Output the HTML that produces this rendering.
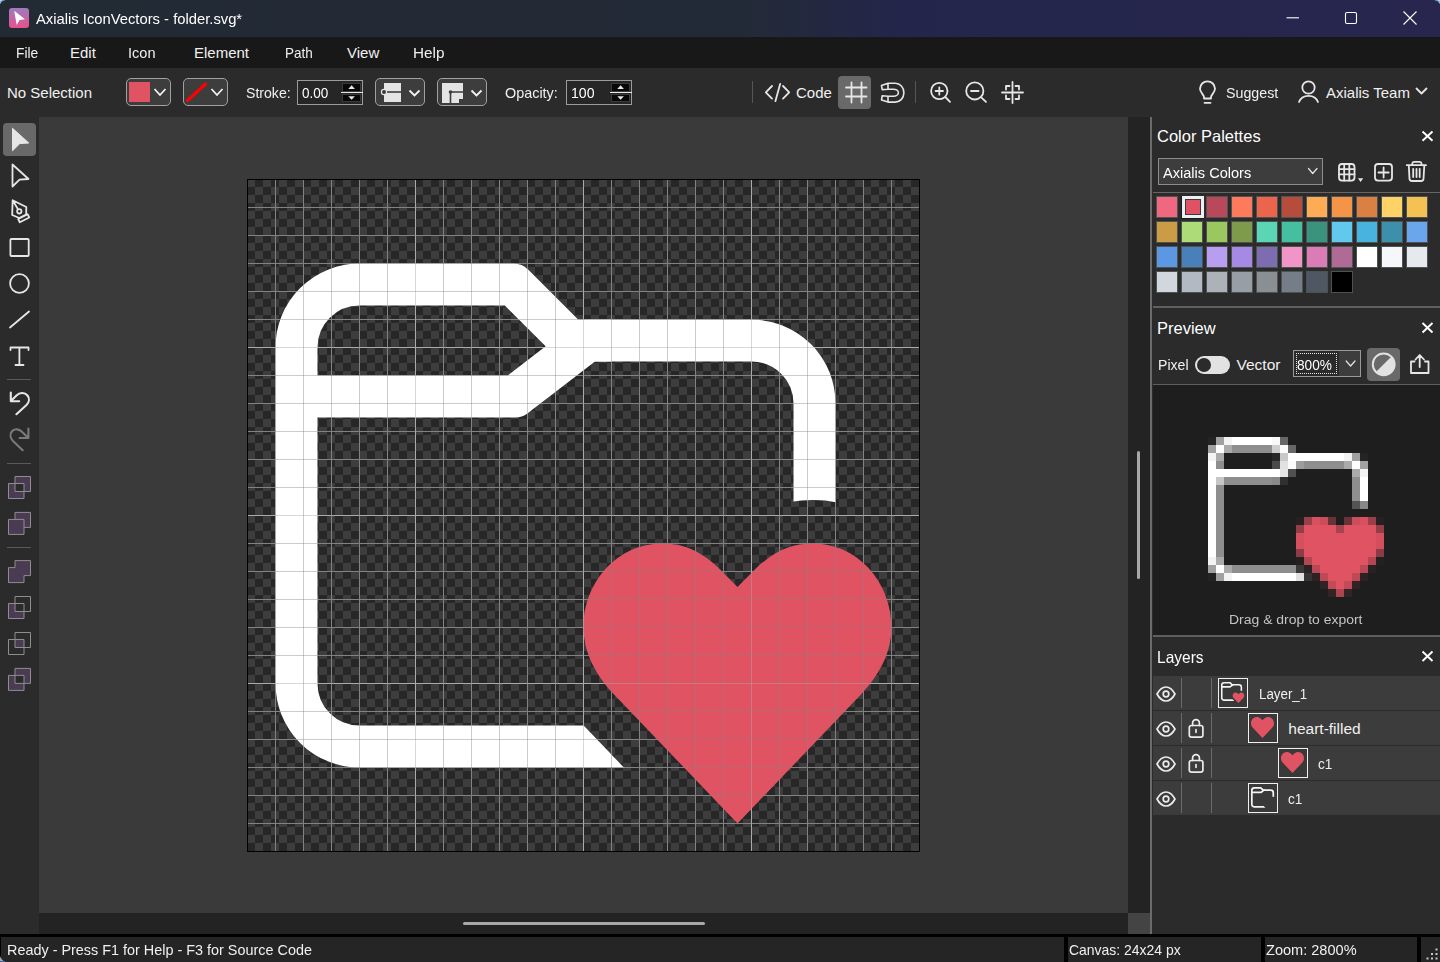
<!DOCTYPE html>
<html><head><meta charset="utf-8">
<style>
*{box-sizing:border-box;margin:0;padding:0}
html,body{width:1440px;height:962px;overflow:hidden;background:#2b2b2b;font-family:"Liberation Sans",sans-serif;color:#f0f0f0;font-size:15px}
.a{position:absolute}
.t{position:absolute;white-space:nowrap;line-height:1}
#title{left:0;top:0;width:1440px;height:37px;background:linear-gradient(90deg,#222a34 0%,#232a37 52%,#23264a 62%,#28264f 100%)}
#menu{left:0;top:37px;width:1440px;height:31px;background:#181818}
#tb{left:0;top:68px;width:1440px;height:49px;background:#2b2b2b}
#ltools{left:0;top:117px;width:39px;height:817px;background:#2b2b2b}
#cv{left:39px;top:117px;width:1089px;height:796px;background:#3a3a3a}
#hs{left:39px;top:913px;width:1089px;height:21px;background:#232323}
#vs{left:1128px;top:117px;width:22px;height:796px;background:#232323}
#corner{left:1128px;top:913px;width:22px;height:21px;background:#444}
#vline{left:1150px;top:117px;width:1px;height:817px;background:#6a6a6a}
#rp{left:1151px;top:117px;width:289px;height:817px;background:#2b2b2b}
#status{left:0;top:934px;width:1440px;height:28px;background:#000}
.sf{position:absolute;top:3px;height:25px;background:#252525}
</style></head><body>
<div id="title" class="a"></div>
<div id="menu" class="a"></div>
<div id="tb" class="a"></div>
<div id="ltools" class="a"></div>
<div id="cv" class="a"></div>
<div id="hs" class="a"></div>
<div id="vs" class="a"></div>
<div id="corner" class="a"></div>
<div id="vline" class="a"></div>
<div id="rp" class="a"></div>
<div id="status" class="a">
 <div class="sf" style="left:1px;width:1063px"></div>
 <div class="sf" style="left:1068px;width:193px"></div>
 <div class="sf" style="left:1265px;width:152px"></div>
 <div class="sf" style="left:1421px;width:19px"></div>
</div>


<!-- TITLE -->
<svg class="a" style="left:9px;top:8px" width="20" height="20" viewBox="0 0 20 20">
 <defs><linearGradient id="ig" x1="0" y1="0" x2="0" y2="1"><stop offset="0" stop-color="#9b7dbf"/><stop offset="1" stop-color="#ea4f8d"/></linearGradient></defs>
 <rect width="20" height="20" rx="3" fill="url(#ig)"/>
 <path d="M5.2 2.8 L16 11.2 L10.6 11.9 L7.7 17 Z" fill="#fff"/>
</svg>
<div class="t" style="transform:scaleX(0.985);transform-origin:0 0;left:36px;top:11.3px;font-size:15px;color:#fff">Axialis IconVectors - folder.svg*</div>
<svg class="a" style="left:1280px;top:8px" width="150" height="22" viewBox="0 0 150 22" fill="none" stroke="#fff" stroke-width="1.1">
 <path d="M6.5 9.8 H19"/>
 <rect x="65.5" y="4.5" width="11" height="11" rx="1.5"/>
 <path d="M123.5 3.5 L136.5 16.5 M136.5 3.5 L123.5 16.5"/>
</svg>
<!-- MENU -->
<div class="t" style="transform:scaleX(0.92);transform-origin:0 0;left:16px;top:45.3px;color:#f0f0f0">File</div>
<div class="t" style="left:70px;top:45.3px;color:#f0f0f0">Edit</div>
<div class="t" style="transform:scaleX(0.97);transform-origin:0 0;left:128px;top:45.3px;color:#f0f0f0">Icon</div>
<div class="t" style="left:194px;top:45.3px;color:#f0f0f0">Element</div>
<div class="t" style="transform:scaleX(0.9);transform-origin:0 0;left:285px;top:45.3px;color:#f0f0f0">Path</div>
<div class="t" style="left:347px;top:45.3px;color:#f0f0f0">View</div>
<div class="t" style="transform:scaleX(1.02);transform-origin:0 0;left:413px;top:45.3px;color:#f0f0f0">Help</div>
<!-- TOOLBAR -->
<div class="t" style="left:7px;top:85.3px;color:#f0f0f0">No Selection</div>
<div class="a" style="left:126px;top:78px;width:45px;height:28px;border:1px solid #a0a0a0;border-radius:5px;background:#3d3d3d"></div>
<div class="a" style="left:129px;top:82px;width:21px;height:20px;background:#e05363"></div>
<div class="a" style="left:183px;top:78px;width:45px;height:28px;border:1px solid #a0a0a0;border-radius:5px;background:#3d3d3d"></div>
<svg class="a" style="left:120px;top:75px" width="380" height="34" viewBox="120 75 380 34" fill="none">
 <path d="M154.5 89 L160 95 L165.5 89" stroke="#f2f2f2" stroke-width="1.8"/>
 <path d="M211.5 89 L217 95 L222.5 89" stroke="#f2f2f2" stroke-width="1.8"/>
 <path d="M187.5 100.5 L205.5 84" stroke="#ff0000" stroke-width="3.2" stroke-linecap="round"/>
</svg>
<div class="t" style="transform:scaleX(0.94);transform-origin:0 0;left:246px;top:85.3px;color:#f0f0f0">Stroke:</div>
<div class="a" style="left:297px;top:80px;width:66px;height:25px;border:1px solid #9c9c9c;background:#262626"></div>
<div class="t" style="transform:scaleX(0.9);transform-origin:0 0;left:302px;top:85.3px;color:#fff">0.00</div>
<div class="a" style="left:342px;top:83px;width:19px;height:8.5px;background:#080808;border:1px solid #3a3a3a"></div>
<div class="a" style="left:342px;top:93.5px;width:19px;height:8.5px;background:#080808;border:1px solid #3a3a3a"></div>
<div class="a" style="left:341px;top:92px;width:22px;height:1px;background:#e8e8e8"></div>
<svg class="a" style="left:340px;top:80px" width="24" height="25" viewBox="0 0 24 25"><path d="M8.3 9 L11.6 5.3 L14.9 9 Z M8.3 16.2 L14.9 16.2 L11.6 19.8 Z" fill="#e8e8e8"/></svg>
<div class="a" style="left:375px;top:78px;width:50px;height:28px;border:1px solid #a0a0a0;border-radius:5px;background:#3d3d3d"></div>
<div class="a" style="left:437px;top:78px;width:50px;height:28px;border:1px solid #a0a0a0;border-radius:5px;background:#3d3d3d"></div>
<svg class="a" style="left:370px;top:75px" width="130" height="34" viewBox="370 75 130 34">
 <rect x="384" y="83" width="17" height="19" fill="#e4e4e4"/>
 <path d="M384 92 H401" stroke="#3d3d3d" stroke-width="1.6"/>
 <circle cx="384" cy="92" r="2.6" fill="#3d3d3d" stroke="#e4e4e4" stroke-width="1.2"/>
 <path d="M409.5 90.5 L414.5 95.5 L419.5 90.5" stroke="#f2f2f2" stroke-width="1.8" fill="none"/>
 <path d="M442 83 H463 V103 H442 Z" fill="#e4e4e4"/>
 <path d="M450.5 103 V92 H463" stroke="#3d3d3d" stroke-width="1.6" fill="none"/>
 <rect x="459" y="99" width="4" height="4" fill="#3d3d3d"/>
 <circle cx="450.5" cy="92" r="1.8" fill="#3d3d3d"/>
 <path d="M471.5 90.5 L476.5 95.5 L481.5 90.5" stroke="#f2f2f2" stroke-width="1.8" fill="none"/>
</svg>
<div class="t" style="transform:scaleX(0.96);transform-origin:0 0;left:505px;top:85.3px;color:#f0f0f0">Opacity:</div>
<div class="a" style="left:566px;top:80px;width:66px;height:25px;border:1px solid #9c9c9c;background:#262626"></div>
<div class="t" style="transform:scaleX(0.94);transform-origin:0 0;left:571px;top:85.3px;color:#fff">100</div>
<div class="a" style="left:611px;top:83px;width:19px;height:8.5px;background:#080808;border:1px solid #3a3a3a"></div>
<div class="a" style="left:611px;top:93.5px;width:19px;height:8.5px;background:#080808;border:1px solid #3a3a3a"></div>
<div class="a" style="left:610px;top:92px;width:22px;height:1px;background:#e8e8e8"></div>
<svg class="a" style="left:609px;top:80px" width="24" height="25" viewBox="0 0 24 25"><path d="M8.3 9 L11.6 5.3 L14.9 9 Z M8.3 16.2 L14.9 16.2 L11.6 19.8 Z" fill="#e8e8e8"/></svg>
<div class="a" style="left:752px;top:81px;width:1px;height:22px;background:#555"></div>
<div class="a" style="left:915px;top:81px;width:1px;height:22px;background:#555"></div>
<div class="a" style="left:838px;top:76px;width:33px;height:33px;border-radius:4px;background:#696969"></div>
<svg class="a" style="left:750px;top:72px" width="290" height="42" viewBox="750 72 290 42" fill="none" stroke="#e6e6e6" stroke-width="1.8" stroke-linecap="round" stroke-linejoin="round">
 <path d="M772 86 L765.8 92.3 L772 98.6 M783 86 L789.2 92.3 L783 98.6 M780.2 83.8 L775.4 101.2"/>
 <path d="M851.5 82.5 V102.5 M861.5 82.5 V102.5 M846 87.5 H866.5 M846 96.5 H866.5"/>
 <path d="M888 83.3 H895.4 A8.5 9.4 0 0 1 895.4 102.1 H888 L881.5 100 L882.2 95.7 L888 96.2 H893.5 A4.9 3.5 0 0 0 893.5 89.2 H888 L882.2 89.6 L881.5 85.5 Z M888 83.3 V89.2 M888 96.2 V102.1" stroke-width="1.6"/>
 <circle cx="939.3" cy="91" r="8.2"/><path d="M945.3 97 L950 101.8 M935.6 91 H943 M939.3 87.3 V94.7"/>
 <circle cx="974.8" cy="90.9" r="8.6"/><path d="M981.2 97.3 L986 101.9 M971 91 H978.6"/>
 <path d="M1012.5 82 V103 M1002 92.5 H1023 M1006 89.5 V86 H1009.5 M1015.5 86 H1019 V89.5 M1019 95.5 V99 H1015.5 M1009.5 99 H1006 V95.5"/>
</svg>
<div class="t" style="left:796px;top:85.3px;color:#f0f0f0">Code</div>
<svg class="a" style="left:1190px;top:72px" width="250" height="40" viewBox="1190 72 250 40" fill="none" stroke="#e6e6e6" stroke-width="1.8" stroke-linecap="round" stroke-linejoin="round">
 <path d="M1204 98.5 V97 C1204 95 1200 92.5 1200 88.8 A7.5 7.5 0 0 1 1215 88.8 C1215 92.5 1211 95 1211 97 V98.5 Z" />
 <path d="M1204.5 102.8 H1210.5"/>
 <circle cx="1308.5" cy="87.5" r="6.2"/>
 <path d="M1299 102 A10 9 0 0 1 1318 102"/>
 <path d="M1416.5 88.5 L1421.5 93.5 L1426.5 88.5"/>
</svg>
<div class="t" style="transform:scaleX(0.95);transform-origin:0 0;left:1226px;top:85.3px;color:#f0f0f0">Suggest</div>
<div class="t" style="left:1326px;top:85.3px;color:#f0f0f0">Axialis Team</div>


<!-- LEFT TOOLS -->
<div class="a" style="left:3px;top:123px;width:33px;height:33px;border-radius:4px;background:#696969"></div>
<svg class="a" style="left:0;top:117px" width="39" height="600" viewBox="0 117 39 600" fill="none" stroke="#e6e6e6" stroke-width="1.8" stroke-linejoin="round" stroke-linecap="round">
 <path d="M12.8 128.5 L28.8 143 L19.8 143.6 L12.8 150.5 Z" fill="#e6e6e6" stroke-width="1"/>
 <path d="M12.5 164.5 L28.5 179 L19.5 179.6 L12.5 186.5 Z"/>
 <path d="M12.6 200.2 L26.3 207 L26.2 214.5 L19.3 218 L12.2 215 Z M12.8 200.6 L18 209.2" />
 <circle cx="19.3" cy="211.3" r="2.2"/>
 <path d="M18.2 219 L27.6 214.2 L29.2 217.5 L19.8 222.3 Z"/>
 <rect x="10.4" y="239" width="18.3" height="17" rx="1"/>
 <circle cx="19.5" cy="283.5" r="9.4"/>
 <path d="M10 327.5 L29 311.5"/>
 <path d="M10.5 347.5 H28.5 M10.5 347.5 V350 M28.5 347.5 V350 M19.4 347.5 V365 M15.5 365 H23.5"/>
 <path d="M10.8 392.6 V401.2 H19.2 M11.4 400.6 L16.5 395.5 C19.5 392.5 24.5 391.8 27.5 395.5 C30 398.5 29 402.5 26.5 405 L16.4 414.2" stroke-width="2.1"/>
 <path d="M28.4 428.6 V438 H19.6 M27.8 437.4 L22.5 432.2 C19.5 429 14.5 428 11.8 431.5 C9.5 434.5 10.5 438.5 13 441 L22.7 450.2" stroke="#7a7a7a" stroke-width="2.1"/>
</svg>
<div class="a" style="left:7px;top:379px;width:24px;height:1px;background:#5a5a5a"></div>
<div class="a" style="left:7px;top:463px;width:24px;height:1px;background:#5a5a5a"></div>
<div class="a" style="left:7px;top:547px;width:24px;height:1px;background:#5a5a5a"></div>
<svg class="a" style="left:0;top:460px" width="39" height="240" viewBox="0 460 39 240" stroke-width="1">
<path d="M15 476.5 H30.5 V491.5 H15 Z M8.5 483.5 H24 V498.5 H8.5 Z" fill="#4a3a52" fill-rule="evenodd"/><path d="M15 476.5 H30.5 V491.5 H15 Z M8.5 483.5 H24 V498.5 H8.5 Z" fill="none" stroke="#8e8e8e"/><path d="M15 512.4 H30.5 V527.4 H15 Z" fill="#4a3a52" stroke="#8e8e8e"/><path d="M8.5 519.4 H24 V534.4 H8.5 Z" fill="#4a3a52" stroke="#8e8e8e"/><path d="M15 560.6 H30.5 V575.6 H24 V582.6 H8.5 V567.6 H15 Z" fill="#4a3a52" stroke="#8e8e8e"/><path d="M8.5 603.5 H15 V611.5 H24 V618.5 H8.5 Z" fill="#4a3a52"/><path d="M15 596.5 H30.5 V611.5 H15 Z M8.5 603.5 H24 V618.5 H8.5 Z" fill="none" stroke="#8e8e8e"/><path d="M15 639.5 H24 V647.5 H15 Z" fill="#4a3a52"/><path d="M15 632.5 H30.5 V647.5 H15 Z M8.5 639.5 H24 V654.5 H8.5 Z" fill="none" stroke="#8e8e8e"/><path d="M15 668.4 H30.5 V683.4 H15 Z M8.5 675.4 H24 V690.4 H8.5 Z" fill="#4a3a52" fill-rule="evenodd"/><path d="M15 668.4 H30.5 V683.4 H15 Z M8.5 675.4 H24 V690.4 H8.5 Z" fill="none" stroke="#8e8e8e"/>
</svg>


<!-- RIGHT PANEL -->
<div class="a" style="left:1150px;top:117px;width:2px;height:817px;background:#6b6b6b"></div>
<div class="t" style="left:1157px;top:127.7px;font-size:16.5px;color:#fff">Color Palettes</div>
<svg class="a" style="left:1418px;top:127px" width="18" height="18" viewBox="0 0 18 18" fill="none" stroke="#fff" stroke-width="1.9"><path d="M4.5 4.5 L14.5 13.8 M14.5 4.5 L4.5 13.8"/></svg>
<div class="a" style="left:1158px;top:158px;width:165px;height:27px;border:1px solid #8d8d8d;background:#3d3d3d"></div>
<div class="t" style="transform:scaleX(0.94);transform-origin:0 0;left:1162.5px;top:165px;font-size:15.5px;color:#fff">Axialis Colors</div>
<svg class="a" style="left:1300px;top:160px" width="140" height="30" viewBox="1300 160 140 30" fill="none" stroke="#e6e6e6" stroke-width="1.8" stroke-linecap="round" stroke-linejoin="round">
 <path d="M1308.5 168.5 L1312.7 173.5 L1317 168.5" stroke-width="1.2"/>
 <rect x="1339" y="164" width="15.5" height="16.6" rx="3"/>
 <path d="M1344.2 164 V180.6 M1349.3 164 V180.6 M1339 169.2 H1354.5 M1339 174.3 H1354.5"/>
 <path d="M1358 178.3 H1363.2 L1360.6 182 Z" fill="#e6e6e6" stroke="none"/>
 <rect x="1375" y="164" width="17" height="16.6" rx="3"/>
 <path d="M1378.5 172.5 H1388.7 M1383.6 167.4 V177.6"/>
 <path d="M1406.8 165.2 H1426 M1412.3 165 V163.5 A1.8 1.8 0 0 1 1414 161.8 H1419.8 A1.8 1.8 0 0 1 1421.5 163.5 V165 M1408.8 165.5 L1409.5 179 A2.5 2.5 0 0 0 1412 181 H1421 A2.5 2.5 0 0 0 1423.5 179 L1424.3 165.5 M1413.2 168.8 V177 M1416.5 168.8 V177 M1419.7 168.8 V177"/>
</svg>
<div class="a" style="left:1153px;top:192px;width:287px;height:1px;background:#666"></div>
<div class="a" style="left:1156px;top:196px;width:22px;height:22px;border:1px solid #4d5252;background:#f06780"></div><div class="a" style="left:1181px;top:196px;width:23px;height:23px;background:#1a1a1a"></div><div class="a" style="left:1182px;top:196px;width:22px;height:22px;border:3px solid #eceff3;background:#e05263;outline:1px solid #3a3a3a;outline-offset:-4px"></div><div class="a" style="left:1206px;top:196px;width:22px;height:22px;border:1px solid #4d5252;background:#b8485a"></div><div class="a" style="left:1231px;top:196px;width:22px;height:22px;border:1px solid #4d5252;background:#fd7b5c"></div><div class="a" style="left:1256px;top:196px;width:22px;height:22px;border:1px solid #4d5252;background:#ea654b"></div><div class="a" style="left:1281px;top:196px;width:22px;height:22px;border:1px solid #4d5252;background:#b64d3c"></div><div class="a" style="left:1306px;top:196px;width:22px;height:22px;border:1px solid #4d5252;background:#fdac55"></div><div class="a" style="left:1331px;top:196px;width:22px;height:22px;border:1px solid #4d5252;background:#f39447"></div><div class="a" style="left:1356px;top:196px;width:22px;height:22px;border:1px solid #4d5252;background:#d98042"></div><div class="a" style="left:1381px;top:196px;width:22px;height:22px;border:1px solid #4d5252;background:#fdd266"></div><div class="a" style="left:1406px;top:196px;width:22px;height:22px;border:1px solid #4d5252;background:#f5c152"></div><div class="a" style="left:1156px;top:221px;width:22px;height:22px;border:1px solid #4d5252;background:#cc9b45"></div><div class="a" style="left:1181px;top:221px;width:22px;height:22px;border:1px solid #4d5252;background:#acdb78"></div><div class="a" style="left:1206px;top:221px;width:22px;height:22px;border:1px solid #4d5252;background:#9ac85e"></div><div class="a" style="left:1231px;top:221px;width:22px;height:22px;border:1px solid #4d5252;background:#7d9b4a"></div><div class="a" style="left:1256px;top:221px;width:22px;height:22px;border:1px solid #4d5252;background:#5bd6b5"></div><div class="a" style="left:1281px;top:221px;width:22px;height:22px;border:1px solid #4d5252;background:#44c0a1"></div><div class="a" style="left:1306px;top:221px;width:22px;height:22px;border:1px solid #4d5252;background:#39937e"></div><div class="a" style="left:1331px;top:221px;width:22px;height:22px;border:1px solid #4d5252;background:#60c9ed"></div><div class="a" style="left:1356px;top:221px;width:22px;height:22px;border:1px solid #4d5252;background:#48b3de"></div><div class="a" style="left:1381px;top:221px;width:22px;height:22px;border:1px solid #4d5252;background:#3d90ac"></div><div class="a" style="left:1406px;top:221px;width:22px;height:22px;border:1px solid #4d5252;background:#6aa6ec"></div><div class="a" style="left:1156px;top:246px;width:22px;height:22px;border:1px solid #4d5252;background:#5c97e3"></div><div class="a" style="left:1181px;top:246px;width:22px;height:22px;border:1px solid #4d5252;background:#4a80ba"></div><div class="a" style="left:1206px;top:246px;width:22px;height:22px;border:1px solid #4d5252;background:#b89df0"></div><div class="a" style="left:1231px;top:246px;width:22px;height:22px;border:1px solid #4d5252;background:#a689e2"></div><div class="a" style="left:1256px;top:246px;width:22px;height:22px;border:1px solid #4d5252;background:#7e6cb0"></div><div class="a" style="left:1281px;top:246px;width:22px;height:22px;border:1px solid #4d5252;background:#f195c9"></div><div class="a" style="left:1306px;top:246px;width:22px;height:22px;border:1px solid #4d5252;background:#db7cb7"></div><div class="a" style="left:1331px;top:246px;width:22px;height:22px;border:1px solid #4d5252;background:#b06a96"></div><div class="a" style="left:1356px;top:246px;width:22px;height:22px;border:1px solid #4d5252;background:#ffffff"></div><div class="a" style="left:1381px;top:246px;width:22px;height:22px;border:1px solid #4d5252;background:#f5f7fa"></div><div class="a" style="left:1406px;top:246px;width:22px;height:22px;border:1px solid #4d5252;background:#e6e9ed"></div><div class="a" style="left:1156px;top:271px;width:22px;height:22px;border:1px solid #4d5252;background:#d2d6dd"></div><div class="a" style="left:1181px;top:271px;width:22px;height:22px;border:1px solid #4d5252;background:#b3b9c2"></div><div class="a" style="left:1206px;top:271px;width:22px;height:22px;border:1px solid #4d5252;background:#adb1b8"></div><div class="a" style="left:1231px;top:271px;width:22px;height:22px;border:1px solid #4d5252;background:#979ea6"></div><div class="a" style="left:1256px;top:271px;width:22px;height:22px;border:1px solid #4d5252;background:#8a8f93"></div><div class="a" style="left:1281px;top:271px;width:22px;height:22px;border:1px solid #4d5252;background:#757d88"></div><div class="a" style="left:1306px;top:271px;width:22px;height:22px;border:1px solid #4d5252;background:#4f5763"></div><div class="a" style="left:1331px;top:271px;width:22px;height:22px;border:1px solid #4d5252;background:#000000"></div>
<div class="a" style="left:1153px;top:306px;width:287px;height:2px;background:#5f5f5f"></div>
<div class="t" style="left:1157px;top:320px;font-size:16.5px;color:#fff">Preview</div>
<svg class="a" style="left:1418px;top:319px" width="18" height="18" viewBox="0 0 18 18" fill="none" stroke="#fff" stroke-width="1.9"><path d="M4.5 4 L14.5 13.5 M14.5 4 L4.5 13.5"/></svg>
<div class="t" style="transform:scaleX(0.91);transform-origin:0 0;left:1157.5px;top:356.5px;font-size:15.5px;color:#f0f0f0">Pixel</div>
<div class="a" style="left:1195px;top:356px;width:35px;height:18px;border-radius:9px;background:#e2e2e2"></div>
<div class="a" style="left:1197px;top:358px;width:14px;height:14px;border-radius:7px;background:#2b2b2b"></div>
<div class="t" style="left:1236.5px;top:356.5px;font-size:15.5px;color:#f0f0f0">Vector</div>
<div class="a" style="left:1293px;top:350px;width:68px;height:27px;border:1px solid #9a9a9a;background:#3d3d3d"></div>
<div class="a" style="left:1294px;top:351px;width:45px;height:25px;background:#2a2a2a"></div>
<div class="a" style="left:1296px;top:353px;width:41px;height:21px;border:1px dotted #e8e8e8"></div>
<div class="t" style="transform:scaleX(0.91);transform-origin:0 0;left:1297px;top:357px;font-size:15px;color:#fff">800%</div>
<div class="a" style="left:1367px;top:348px;width:33px;height:33px;border-radius:4px;background:#696969"></div>
<svg class="a" style="left:1340px;top:345px" width="100" height="40" viewBox="1340 345 100 40" fill="none" stroke="#e6e6e6" stroke-width="1.8" stroke-linecap="round" stroke-linejoin="round">
 <path d="M1346.2 361 L1350.6 366 L1355 361" stroke-width="1.2"/>
 <path d="M1375.9 372.1 L1391.5 356.5 A11 11 0 0 1 1375.9 372.1 Z" fill="#e2e2e2" stroke="none"/>
 <circle cx="1383.7" cy="364.3" r="10.9" stroke="#e2e2e2" stroke-width="2"/>
 <path d="M1414.5 361.5 H1411 V373 H1428.5 V361.5 H1425 M1419.7 367 V355.5 M1415.5 359.5 L1419.7 355 L1424 359.5"/>
</svg>
<div class="a" style="left:1153px;top:384px;width:287px;height:1px;background:#5f5f5f"></div>
<div class="a" style="left:1153px;top:385px;width:287px;height:250px;background:#1e1e1e"></div>
<svg class="a" style="left:1200px;top:413px" width="192" height="192" viewBox="0 0 192 192" shape-rendering="crispEdges"><rect x="8" y="24" width="8" height="8" fill="#242424"/><rect x="16" y="24" width="8" height="8" fill="#a1a1a1"/><rect x="24" y="24" width="8" height="8" fill="#f3f3f3"/><rect x="32" y="24" width="8" height="8" fill="#ffffff"/><rect x="40" y="24" width="8" height="8" fill="#ffffff"/><rect x="48" y="24" width="8" height="8" fill="#ffffff"/><rect x="56" y="24" width="8" height="8" fill="#ffffff"/><rect x="64" y="24" width="8" height="8" fill="#ffffff"/><rect x="72" y="24" width="8" height="8" fill="#f8f8f8"/><rect x="80" y="24" width="8" height="8" fill="#676767"/><rect x="8" y="32" width="8" height="8" fill="#a1a1a1"/><rect x="16" y="32" width="8" height="8" fill="#fdfdfd"/><rect x="24" y="32" width="8" height="8" fill="#aaaaaa"/><rect x="32" y="32" width="8" height="8" fill="#8e8e8e"/><rect x="40" y="32" width="8" height="8" fill="#8e8e8e"/><rect x="48" y="32" width="8" height="8" fill="#8e8e8e"/><rect x="56" y="32" width="8" height="8" fill="#8e8e8e"/><rect x="64" y="32" width="8" height="8" fill="#8e8e8e"/><rect x="72" y="32" width="8" height="8" fill="#cdcdcd"/><rect x="80" y="32" width="8" height="8" fill="#fbfbfb"/><rect x="88" y="32" width="8" height="8" fill="#676767"/><rect x="8" y="40" width="8" height="8" fill="#f3f3f3"/><rect x="16" y="40" width="8" height="8" fill="#aaaaaa"/><rect x="72" y="40" width="8" height="8" fill="#282828"/><rect x="80" y="40" width="8" height="8" fill="#c9c9c9"/><rect x="88" y="40" width="8" height="8" fill="#ffffff"/><rect x="96" y="40" width="8" height="8" fill="#ffffff"/><rect x="104" y="40" width="8" height="8" fill="#ffffff"/><rect x="112" y="40" width="8" height="8" fill="#ffffff"/><rect x="120" y="40" width="8" height="8" fill="#ffffff"/><rect x="128" y="40" width="8" height="8" fill="#ffffff"/><rect x="136" y="40" width="8" height="8" fill="#ffffff"/><rect x="144" y="40" width="8" height="8" fill="#f3f3f3"/><rect x="152" y="40" width="8" height="8" fill="#a0a0a0"/><rect x="160" y="40" width="8" height="8" fill="#242424"/><rect x="8" y="48" width="8" height="8" fill="#ffffff"/><rect x="16" y="48" width="8" height="8" fill="#8e8e8e"/><rect x="72" y="48" width="8" height="8" fill="#4a4a4a"/><rect x="80" y="48" width="8" height="8" fill="#e1e1e1"/><rect x="88" y="48" width="8" height="8" fill="#fafafa"/><rect x="96" y="48" width="8" height="8" fill="#9d9d9d"/><rect x="104" y="48" width="8" height="8" fill="#8e8e8e"/><rect x="112" y="48" width="8" height="8" fill="#8e8e8e"/><rect x="120" y="48" width="8" height="8" fill="#8e8e8e"/><rect x="128" y="48" width="8" height="8" fill="#8e8e8e"/><rect x="136" y="48" width="8" height="8" fill="#8e8e8e"/><rect x="144" y="48" width="8" height="8" fill="#aaaaaa"/><rect x="152" y="48" width="8" height="8" fill="#fdfdfd"/><rect x="160" y="48" width="8" height="8" fill="#a1a1a1"/><rect x="8" y="56" width="8" height="8" fill="#ffffff"/><rect x="16" y="56" width="8" height="8" fill="#ffffff"/><rect x="24" y="56" width="8" height="8" fill="#ffffff"/><rect x="32" y="56" width="8" height="8" fill="#ffffff"/><rect x="40" y="56" width="8" height="8" fill="#ffffff"/><rect x="48" y="56" width="8" height="8" fill="#ffffff"/><rect x="56" y="56" width="8" height="8" fill="#ffffff"/><rect x="64" y="56" width="8" height="8" fill="#ffffff"/><rect x="72" y="56" width="8" height="8" fill="#ffffff"/><rect x="80" y="56" width="8" height="8" fill="#e6e6e6"/><rect x="88" y="56" width="8" height="8" fill="#505050"/><rect x="152" y="56" width="8" height="8" fill="#aaaaaa"/><rect x="160" y="56" width="8" height="8" fill="#f3f3f3"/><rect x="8" y="64" width="8" height="8" fill="#ffffff"/><rect x="16" y="64" width="8" height="8" fill="#c7c7c7"/><rect x="24" y="64" width="8" height="8" fill="#8e8e8e"/><rect x="32" y="64" width="8" height="8" fill="#8e8e8e"/><rect x="40" y="64" width="8" height="8" fill="#8e8e8e"/><rect x="48" y="64" width="8" height="8" fill="#8e8e8e"/><rect x="56" y="64" width="8" height="8" fill="#8e8e8e"/><rect x="64" y="64" width="8" height="8" fill="#8e8e8e"/><rect x="72" y="64" width="8" height="8" fill="#898989"/><rect x="80" y="64" width="8" height="8" fill="#303030"/><rect x="152" y="64" width="8" height="8" fill="#8e8e8e"/><rect x="160" y="64" width="8" height="8" fill="#ffffff"/><rect x="8" y="72" width="8" height="8" fill="#ffffff"/><rect x="16" y="72" width="8" height="8" fill="#8e8e8e"/><rect x="152" y="72" width="8" height="8" fill="#8e8e8e"/><rect x="160" y="72" width="8" height="8" fill="#ffffff"/><rect x="8" y="80" width="8" height="8" fill="#ffffff"/><rect x="16" y="80" width="8" height="8" fill="#8e8e8e"/><rect x="152" y="80" width="8" height="8" fill="#8e8e8e"/><rect x="160" y="80" width="8" height="8" fill="#ffffff"/><rect x="8" y="88" width="8" height="8" fill="#ffffff"/><rect x="16" y="88" width="8" height="8" fill="#8e8e8e"/><rect x="152" y="88" width="8" height="8" fill="#545454"/><rect x="160" y="88" width="8" height="8" fill="#898989"/><rect x="8" y="96" width="8" height="8" fill="#ffffff"/><rect x="16" y="96" width="8" height="8" fill="#8e8e8e"/><rect x="8" y="104" width="8" height="8" fill="#ffffff"/><rect x="16" y="104" width="8" height="8" fill="#8e8e8e"/><rect x="96" y="104" width="8" height="8" fill="#272021"/><rect x="104" y="104" width="8" height="8" fill="#993f4a"/><rect x="112" y="104" width="8" height="8" fill="#d95161"/><rect x="120" y="104" width="8" height="8" fill="#cb4d5c"/><rect x="128" y="104" width="8" height="8" fill="#683238"/><rect x="144" y="104" width="8" height="8" fill="#693238"/><rect x="152" y="104" width="8" height="8" fill="#cc4d5c"/><rect x="160" y="104" width="8" height="8" fill="#d95161"/><rect x="168" y="104" width="8" height="8" fill="#983f49"/><rect x="176" y="104" width="8" height="8" fill="#262021"/><rect x="8" y="112" width="8" height="8" fill="#ffffff"/><rect x="16" y="112" width="8" height="8" fill="#8e8e8e"/><rect x="96" y="112" width="8" height="8" fill="#943e48"/><rect x="104" y="112" width="8" height="8" fill="#e05363"/><rect x="112" y="112" width="8" height="8" fill="#e05363"/><rect x="120" y="112" width="8" height="8" fill="#e05363"/><rect x="128" y="112" width="8" height="8" fill="#e05363"/><rect x="136" y="112" width="8" height="8" fill="#a5434e"/><rect x="144" y="112" width="8" height="8" fill="#e05363"/><rect x="152" y="112" width="8" height="8" fill="#e05363"/><rect x="160" y="112" width="8" height="8" fill="#e05363"/><rect x="168" y="112" width="8" height="8" fill="#e05363"/><rect x="176" y="112" width="8" height="8" fill="#933e47"/><rect x="8" y="120" width="8" height="8" fill="#ffffff"/><rect x="16" y="120" width="8" height="8" fill="#8e8e8e"/><rect x="96" y="120" width="8" height="8" fill="#d65060"/><rect x="104" y="120" width="8" height="8" fill="#e05363"/><rect x="112" y="120" width="8" height="8" fill="#e05363"/><rect x="120" y="120" width="8" height="8" fill="#e05363"/><rect x="128" y="120" width="8" height="8" fill="#e05363"/><rect x="136" y="120" width="8" height="8" fill="#e05363"/><rect x="144" y="120" width="8" height="8" fill="#e05363"/><rect x="152" y="120" width="8" height="8" fill="#e05363"/><rect x="160" y="120" width="8" height="8" fill="#e05363"/><rect x="168" y="120" width="8" height="8" fill="#e05363"/><rect x="176" y="120" width="8" height="8" fill="#d5505f"/><rect x="8" y="128" width="8" height="8" fill="#ffffff"/><rect x="16" y="128" width="8" height="8" fill="#8e8e8e"/><rect x="96" y="128" width="8" height="8" fill="#d4505f"/><rect x="104" y="128" width="8" height="8" fill="#e05363"/><rect x="112" y="128" width="8" height="8" fill="#e05363"/><rect x="120" y="128" width="8" height="8" fill="#e05363"/><rect x="128" y="128" width="8" height="8" fill="#e05363"/><rect x="136" y="128" width="8" height="8" fill="#e05363"/><rect x="144" y="128" width="8" height="8" fill="#e05363"/><rect x="152" y="128" width="8" height="8" fill="#e05363"/><rect x="160" y="128" width="8" height="8" fill="#e05363"/><rect x="168" y="128" width="8" height="8" fill="#e05363"/><rect x="176" y="128" width="8" height="8" fill="#d34f5e"/><rect x="8" y="136" width="8" height="8" fill="#ffffff"/><rect x="16" y="136" width="8" height="8" fill="#8e8e8e"/><rect x="96" y="136" width="8" height="8" fill="#8b3c45"/><rect x="104" y="136" width="8" height="8" fill="#e05363"/><rect x="112" y="136" width="8" height="8" fill="#e05363"/><rect x="120" y="136" width="8" height="8" fill="#e05363"/><rect x="128" y="136" width="8" height="8" fill="#e05363"/><rect x="136" y="136" width="8" height="8" fill="#e05363"/><rect x="144" y="136" width="8" height="8" fill="#e05363"/><rect x="152" y="136" width="8" height="8" fill="#e05363"/><rect x="160" y="136" width="8" height="8" fill="#e05363"/><rect x="168" y="136" width="8" height="8" fill="#e05363"/><rect x="176" y="136" width="8" height="8" fill="#8a3c44"/><rect x="8" y="144" width="8" height="8" fill="#f3f3f3"/><rect x="16" y="144" width="8" height="8" fill="#aaaaaa"/><rect x="96" y="144" width="8" height="8" fill="#252020"/><rect x="104" y="144" width="8" height="8" fill="#b24653"/><rect x="112" y="144" width="8" height="8" fill="#e05363"/><rect x="120" y="144" width="8" height="8" fill="#e05363"/><rect x="128" y="144" width="8" height="8" fill="#e05363"/><rect x="136" y="144" width="8" height="8" fill="#e05363"/><rect x="144" y="144" width="8" height="8" fill="#e05363"/><rect x="152" y="144" width="8" height="8" fill="#e05363"/><rect x="160" y="144" width="8" height="8" fill="#e05363"/><rect x="168" y="144" width="8" height="8" fill="#b24653"/><rect x="176" y="144" width="8" height="8" fill="#252020"/><rect x="8" y="152" width="8" height="8" fill="#a1a1a1"/><rect x="16" y="152" width="8" height="8" fill="#fdfdfd"/><rect x="24" y="152" width="8" height="8" fill="#aaaaaa"/><rect x="32" y="152" width="8" height="8" fill="#8e8e8e"/><rect x="40" y="152" width="8" height="8" fill="#8e8e8e"/><rect x="48" y="152" width="8" height="8" fill="#8e8e8e"/><rect x="56" y="152" width="8" height="8" fill="#8e8e8e"/><rect x="64" y="152" width="8" height="8" fill="#8e8e8e"/><rect x="72" y="152" width="8" height="8" fill="#8e8e8e"/><rect x="80" y="152" width="8" height="8" fill="#8e8e8e"/><rect x="88" y="152" width="8" height="8" fill="#8e8e8e"/><rect x="96" y="152" width="8" height="8" fill="#393939"/><rect x="104" y="152" width="8" height="8" fill="#292122"/><rect x="112" y="152" width="8" height="8" fill="#b84855"/><rect x="120" y="152" width="8" height="8" fill="#e05363"/><rect x="128" y="152" width="8" height="8" fill="#e05363"/><rect x="136" y="152" width="8" height="8" fill="#e05363"/><rect x="144" y="152" width="8" height="8" fill="#e05363"/><rect x="152" y="152" width="8" height="8" fill="#e05363"/><rect x="160" y="152" width="8" height="8" fill="#b84855"/><rect x="168" y="152" width="8" height="8" fill="#292122"/><rect x="8" y="160" width="8" height="8" fill="#242424"/><rect x="16" y="160" width="8" height="8" fill="#a1a1a1"/><rect x="24" y="160" width="8" height="8" fill="#f3f3f3"/><rect x="32" y="160" width="8" height="8" fill="#ffffff"/><rect x="40" y="160" width="8" height="8" fill="#ffffff"/><rect x="48" y="160" width="8" height="8" fill="#ffffff"/><rect x="56" y="160" width="8" height="8" fill="#ffffff"/><rect x="64" y="160" width="8" height="8" fill="#ffffff"/><rect x="72" y="160" width="8" height="8" fill="#ffffff"/><rect x="80" y="160" width="8" height="8" fill="#ffffff"/><rect x="88" y="160" width="8" height="8" fill="#ffffff"/><rect x="96" y="160" width="8" height="8" fill="#e0e0e0"/><rect x="104" y="160" width="8" height="8" fill="#353535"/><rect x="112" y="160" width="8" height="8" fill="#2c2223"/><rect x="120" y="160" width="8" height="8" fill="#bd4957"/><rect x="128" y="160" width="8" height="8" fill="#e05363"/><rect x="136" y="160" width="8" height="8" fill="#e05363"/><rect x="144" y="160" width="8" height="8" fill="#e05363"/><rect x="152" y="160" width="8" height="8" fill="#bd4957"/><rect x="160" y="160" width="8" height="8" fill="#2c2223"/><rect x="120" y="168" width="8" height="8" fill="#2f2324"/><rect x="128" y="168" width="8" height="8" fill="#c24b58"/><rect x="136" y="168" width="8" height="8" fill="#e05363"/><rect x="144" y="168" width="8" height="8" fill="#c24b58"/><rect x="152" y="168" width="8" height="8" fill="#2f2324"/><rect x="128" y="176" width="8" height="8" fill="#332426"/><rect x="136" y="176" width="8" height="8" fill="#ad4551"/><rect x="144" y="176" width="8" height="8" fill="#332426"/></svg>
<div class="t" style="left:1229px;top:613px;font-size:13.7px;color:#c4c4c4;transform:scaleX(1.02);transform-origin:0 0">Drag &amp; drop to export</div>
<div class="a" style="left:1153px;top:635px;width:287px;height:2px;background:#5f5f5f"></div>
<div class="t" style="transform:scaleX(0.94);transform-origin:0 0;left:1157px;top:649px;font-size:16.5px;color:#fff">Layers</div>
<svg class="a" style="left:1418px;top:647px" width="18" height="18" viewBox="0 0 18 18" fill="none" stroke="#fff" stroke-width="1.9"><path d="M4.5 4.5 L14.5 14 M14.5 4.5 L4.5 14"/></svg>


<div class="a" style="left:1153px;top:676px;width:287px;height:34px;background:#3c3c3c"></div><div class="a" style="left:1181px;top:678px;width:1px;height:30px;background:#6a6a6a"></div><div class="a" style="left:1211px;top:678px;width:1px;height:30px;background:#6a6a6a"></div><div class="a" style="left:1153px;top:711px;width:287px;height:34px;background:#3c3c3c"></div><div class="a" style="left:1181px;top:713px;width:1px;height:30px;background:#6a6a6a"></div><div class="a" style="left:1211px;top:713px;width:1px;height:30px;background:#6a6a6a"></div><div class="a" style="left:1153px;top:746px;width:287px;height:34px;background:#3c3c3c"></div><div class="a" style="left:1181px;top:748px;width:1px;height:30px;background:#6a6a6a"></div><div class="a" style="left:1211px;top:748px;width:1px;height:30px;background:#6a6a6a"></div><div class="a" style="left:1153px;top:781px;width:287px;height:34px;background:#3c3c3c"></div><div class="a" style="left:1181px;top:783px;width:1px;height:30px;background:#6a6a6a"></div><div class="a" style="left:1211px;top:783px;width:1px;height:30px;background:#6a6a6a"></div>
<svg class="a" style="left:1150px;top:670px" width="70" height="150" viewBox="1150 670 70 150" fill="none" stroke="#ececec" stroke-width="1.7" stroke-linejoin="round" stroke-linecap="round"><path d="M1157 694 C1160 688.5 1163.5 687 1166 687 C1168.5 687 1172 688.5 1175 694 C1172 699.5 1168.5 701 1166 701 C1163.5 701 1160 699.5 1157 694 Z"/><circle cx="1166" cy="694" r="2.8"/><path d="M1157 729 C1160 723.5 1163.5 722 1166 722 C1168.5 722 1172 723.5 1175 729 C1172 734.5 1168.5 736 1166 736 C1163.5 736 1160 734.5 1157 729 Z"/><circle cx="1166" cy="729" r="2.8"/><path d="M1157 764 C1160 758.5 1163.5 757 1166 757 C1168.5 757 1172 758.5 1175 764 C1172 769.5 1168.5 771 1166 771 C1163.5 771 1160 769.5 1157 764 Z"/><circle cx="1166" cy="764" r="2.8"/><path d="M1157 799 C1160 793.5 1163.5 792 1166 792 C1168.5 792 1172 793.5 1175 799 C1172 804.5 1168.5 806 1166 806 C1163.5 806 1160 804.5 1157 799 Z"/><circle cx="1166" cy="799" r="2.8"/><rect x="1189.3" y="725.5" width="13.6" height="11.6" rx="2.2"/><path d="M1192.6 725.5 V723.1 A3.4 3.4 0 0 1 1199.4 723.1 V725.5 M1196 729.5 V732.3"/><rect x="1189.3" y="760.5" width="13.6" height="11.6" rx="2.2"/><path d="M1192.6 760.5 V758.1 A3.4 3.4 0 0 1 1199.4 758.1 V760.5 M1196 764.5 V767.3"/></svg>
<div class="a" style="left:1218px;top:678px;width:30px;height:30px;border:1px solid #f0f0f0;background:#393939"></div><div class="a" style="left:1248px;top:713px;width:30px;height:30px;border:1px solid #f0f0f0;background:#393939"></div><div class="a" style="left:1278px;top:748px;width:30px;height:30px;border:1px solid #f0f0f0;background:#393939"></div><div class="a" style="left:1248px;top:783px;width:30px;height:30px;border:1px solid #f0f0f0;background:#393939"></div>
<svg class="a" style="left:0;top:0" width="1440" height="962" viewBox="0 0 1440 962"><g transform="translate(1219.9,678.7) scale(1.06)"><g mask="url(#hm)" fill="none" stroke="#f4f4f4" stroke-width="1.5" stroke-linejoin="round"><path d="M16 20.25 L4 20.25 A2.25 2.25 0 0 1 1.75 18 L1.75 6 A2.25 2.25 0 0 1 4 3.75 L9.5 3.75 L11.5 5.75 L18 5.75 A2.25 2.25 0 0 1 20.25 8 L20.25 14"/><path d="M1.75 7.75 L9.55 7.75 L12.15 5.75 L13 5.75"/></g><path d="M17.5 23 L13.1 18.4 C12.45 17.72 12 16.9 12 16 C12 14.34 13.25 13 14.8 13 C15.5 13 16.1 13.2 16.8 13.85 L17.5 14.55 L18.2 13.85 C18.9 13.2 19.5 13 20.2 13 C21.75 13 23 14.34 23 16 C23 16.9 22.55 17.72 21.9 18.4 Z" fill="#e05363"/></g><g transform="translate(1251,717) scale(2.09) translate(-12,-13)"><path d="M17.5 23 L13.1 18.4 C12.45 17.72 12 16.9 12 16 C12 14.34 13.25 13 14.8 13 C15.5 13 16.1 13.2 16.8 13.85 L17.5 14.55 L18.2 13.85 C18.9 13.2 19.5 13 20.2 13 C21.75 13 23 14.34 23 16 C23 16.9 22.55 17.72 21.9 18.4 Z" fill="#e05363"/></g><g transform="translate(1281,752) scale(2.09) translate(-12,-13)"><path d="M17.5 23 L13.1 18.4 C12.45 17.72 12 16.9 12 16 C12 14.34 13.25 13 14.8 13 C15.5 13 16.1 13.2 16.8 13.85 L17.5 14.55 L18.2 13.85 C18.9 13.2 19.5 13 20.2 13 C21.75 13 23 14.34 23 16 C23 16.9 22.55 17.72 21.9 18.4 Z" fill="#e05363"/></g><g transform="translate(1249.8,783.5) scale(1.16)"><g mask="url(#hm)" fill="none" stroke="#f4f4f4" stroke-width="1.5" stroke-linejoin="round"><path d="M16 20.25 L4 20.25 A2.25 2.25 0 0 1 1.75 18 L1.75 6 A2.25 2.25 0 0 1 4 3.75 L9.5 3.75 L11.5 5.75 L18 5.75 A2.25 2.25 0 0 1 20.25 8 L20.25 14"/><path d="M1.75 7.75 L9.55 7.75 L12.15 5.75 L13 5.75"/></g></g></svg>
<div class="t" style="transform:scaleX(0.86);transform-origin:0 0;left:1258.5px;top:686px;font-size:15.5px;color:#f0f0f0">Layer_1</div>
<div class="t" style="left:1288.3px;top:721px;font-size:15.5px;color:#f0f0f0">heart-filled</div>
<div class="t" style="transform:scaleX(0.88);transform-origin:0 0;left:1318.3px;top:756px;font-size:15.5px;color:#f0f0f0">c1</div>
<div class="t" style="transform:scaleX(0.88);transform-origin:0 0;left:1288.3px;top:791px;font-size:15.5px;color:#f0f0f0">c1</div>


<!-- STATUS / SCROLL -->
<div class="a" style="left:463px;top:922px;width:242px;height:3px;border-radius:1.5px;background:#a8a8a8"></div>
<div class="a" style="left:1137px;top:451px;width:3px;height:128px;border-radius:1.5px;background:#a8a8a8"></div>
<div class="t" style="transform:scaleX(0.96);transform-origin:0 0;left:6.6px;top:942.3px;color:#f0f0f0">Ready - Press F1 for Help - F3 for Source Code</div>
<div class="t" style="transform:scaleX(0.93);transform-origin:0 0;left:1069px;top:942.3px;color:#f0f0f0">Canvas: 24x24 px</div>
<div class="t" style="transform:scaleX(0.97);transform-origin:0 0;left:1266px;top:942.3px;color:#f0f0f0">Zoom: 2800%</div>

<svg class="a" style="left:1420px;top:940px" width="20" height="22" viewBox="1420 940 20 22" fill="#c8c8c8">
<rect x="1435.5" y="948.5" width="2" height="2"/><rect x="1431" y="953" width="2" height="2"/><rect x="1435.5" y="953" width="2" height="2"/><rect x="1426.5" y="957.5" width="2" height="2"/><rect x="1431" y="957.5" width="2" height="2"/><rect x="1435.5" y="957.5" width="2" height="2"/></svg>
<!-- CANVAS -->
<div class="a" style="left:247px;top:179px;width:673px;height:673px">
<svg width="673" height="673" viewBox="0 0 673 673" style="display:block">
 <defs>
  <pattern id="chk" x="0" y="0" width="16" height="16" patternUnits="userSpaceOnUse">
   <rect width="16" height="16" fill="#272727"/>
   <rect width="8" height="8" fill="#3d3d3d"/>
   <rect x="8" y="8" width="8" height="8" fill="#3d3d3d"/>
  </pattern>
  <mask id="hm" maskUnits="userSpaceOnUse" x="-2" y="-2" width="28" height="28">
   <rect x="-2" y="-2" width="28" height="28" fill="#fff"/>
   <path d="M17.5 23 L13.1 18.4 C12.45 17.72 12 16.9 12 16 C12 14.34 13.25 13 14.8 13 C15.5 13 16.1 13.2 16.8 13.85 L17.5 14.55 L18.2 13.85 C18.9 13.2 19.5 13 20.2 13 C21.75 13 23 14.34 23 16 C23 16.9 22.55 17.72 21.9 18.4 Z" fill="#000" stroke="#000" stroke-width="3.1" stroke-linejoin="miter"/>
  </mask>
 </defs>
 <rect width="673" height="673" fill="url(#chk)"/>
 <g fill="#828282"><rect x="28" y="1" width="1" height="671"/><rect y="28" x="1" height="1" width="671"/><rect x="56" y="1" width="1" height="671"/><rect y="56" x="1" height="1" width="671"/><rect x="84" y="1" width="1" height="671"/><rect y="84" x="1" height="1" width="671"/><rect x="112" y="1" width="1" height="671"/><rect y="112" x="1" height="1" width="671"/><rect x="140" y="1" width="1" height="671"/><rect y="140" x="1" height="1" width="671"/><rect x="196" y="1" width="1" height="671"/><rect y="196" x="1" height="1" width="671"/><rect x="224" y="1" width="1" height="671"/><rect y="224" x="1" height="1" width="671"/><rect x="252" y="1" width="1" height="671"/><rect y="252" x="1" height="1" width="671"/><rect x="280" y="1" width="1" height="671"/><rect y="280" x="1" height="1" width="671"/><rect x="308" y="1" width="1" height="671"/><rect y="308" x="1" height="1" width="671"/><rect x="364" y="1" width="1" height="671"/><rect y="364" x="1" height="1" width="671"/><rect x="392" y="1" width="1" height="671"/><rect y="392" x="1" height="1" width="671"/><rect x="420" y="1" width="1" height="671"/><rect y="420" x="1" height="1" width="671"/><rect x="448" y="1" width="1" height="671"/><rect y="448" x="1" height="1" width="671"/><rect x="476" y="1" width="1" height="671"/><rect y="476" x="1" height="1" width="671"/><rect x="532" y="1" width="1" height="671"/><rect y="532" x="1" height="1" width="671"/><rect x="560" y="1" width="1" height="671"/><rect y="560" x="1" height="1" width="671"/><rect x="588" y="1" width="1" height="671"/><rect y="588" x="1" height="1" width="671"/><rect x="616" y="1" width="1" height="671"/><rect y="616" x="1" height="1" width="671"/><rect x="644" y="1" width="1" height="671"/><rect y="644" x="1" height="1" width="671"/></g><g fill="#ababab"><rect x="168" y="1" width="1" height="671"/><rect y="168" x="1" height="1" width="671"/><rect x="336" y="1" width="1" height="671"/><rect y="336" x="1" height="1" width="671"/><rect x="504" y="1" width="1" height="671"/><rect y="504" x="1" height="1" width="671"/></g>
 <g transform="translate(0.5,0.5) scale(28)">
  <g mask="url(#hm)" fill="none" stroke="#fff" stroke-width="1.5" stroke-linejoin="round">
   <path d="M16 20.25 L4 20.25 A2.25 2.25 0 0 1 1.75 18 L1.75 6 A2.25 2.25 0 0 1 4 3.75 L9.5 3.75 L11.5 5.75 L18 5.75 A2.25 2.25 0 0 1 20.25 8 L20.25 14"/>
   <path d="M1.75 7.75 L9.55 7.75 L12.15 5.75 L13 5.75"/>
  </g>
 </g>
 <g transform="translate(0.5,0.5) scale(28)">
  <path d="M17.5 23 L13.1 18.4 C12.45 17.72 12 16.9 12 16 C12 14.34 13.25 13 14.8 13 C15.5 13 16.1 13.2 16.8 13.85 L17.5 14.55 L18.2 13.85 C18.9 13.2 19.5 13 20.2 13 C21.75 13 23 14.34 23 16 C23 16.9 22.55 17.72 21.9 18.4 Z" fill="#e05363"/>
 </g>
 <g fill="rgba(130,130,130,0.42)"><rect x="28" y="1" width="1" height="671"/><rect y="28" x="1" height="1" width="671"/><rect x="56" y="1" width="1" height="671"/><rect y="56" x="1" height="1" width="671"/><rect x="84" y="1" width="1" height="671"/><rect y="84" x="1" height="1" width="671"/><rect x="112" y="1" width="1" height="671"/><rect y="112" x="1" height="1" width="671"/><rect x="140" y="1" width="1" height="671"/><rect y="140" x="1" height="1" width="671"/><rect x="196" y="1" width="1" height="671"/><rect y="196" x="1" height="1" width="671"/><rect x="224" y="1" width="1" height="671"/><rect y="224" x="1" height="1" width="671"/><rect x="252" y="1" width="1" height="671"/><rect y="252" x="1" height="1" width="671"/><rect x="280" y="1" width="1" height="671"/><rect y="280" x="1" height="1" width="671"/><rect x="308" y="1" width="1" height="671"/><rect y="308" x="1" height="1" width="671"/><rect x="364" y="1" width="1" height="671"/><rect y="364" x="1" height="1" width="671"/><rect x="392" y="1" width="1" height="671"/><rect y="392" x="1" height="1" width="671"/><rect x="420" y="1" width="1" height="671"/><rect y="420" x="1" height="1" width="671"/><rect x="448" y="1" width="1" height="671"/><rect y="448" x="1" height="1" width="671"/><rect x="476" y="1" width="1" height="671"/><rect y="476" x="1" height="1" width="671"/><rect x="532" y="1" width="1" height="671"/><rect y="532" x="1" height="1" width="671"/><rect x="560" y="1" width="1" height="671"/><rect y="560" x="1" height="1" width="671"/><rect x="588" y="1" width="1" height="671"/><rect y="588" x="1" height="1" width="671"/><rect x="616" y="1" width="1" height="671"/><rect y="616" x="1" height="1" width="671"/><rect x="644" y="1" width="1" height="671"/><rect y="644" x="1" height="1" width="671"/></g><g fill="rgba(171,171,171,0.46)"><rect x="168" y="1" width="1" height="671"/><rect y="168" x="1" height="1" width="671"/><rect x="336" y="1" width="1" height="671"/><rect y="336" x="1" height="1" width="671"/><rect x="504" y="1" width="1" height="671"/><rect y="504" x="1" height="1" width="671"/></g>
 <rect x="0.5" y="0.5" width="672" height="672" fill="none" stroke="#000" stroke-width="1"/>
</svg>
</div>

<svg class="a" style="left:0;top:0" width="1440" height="962" viewBox="0 0 1440 962">
<path d="M0 0 H4.5 A8 8 0 0 0 0 4 Z" fill="#d6d6d6"/><path d="M0 2.2 A8 8 0 0 1 4.8 0.2" stroke="#4a90d8" stroke-width="1" fill="none"/>
<path d="M1440 0 H1434.5 A8 8 0 0 1 1440 4 Z" fill="#d6d6d6"/><path d="M1440 2.2 A8 8 0 0 0 1435.2 0.2" stroke="#4a90d8" stroke-width="1" fill="none"/>
<path d="M0 962 V952 A9 9 0 0 0 5 962 Z" fill="#a8a8a8"/><rect x="0" y="961" width="5" height="1" fill="#3a68b0"/>
</svg>
</body></html>
